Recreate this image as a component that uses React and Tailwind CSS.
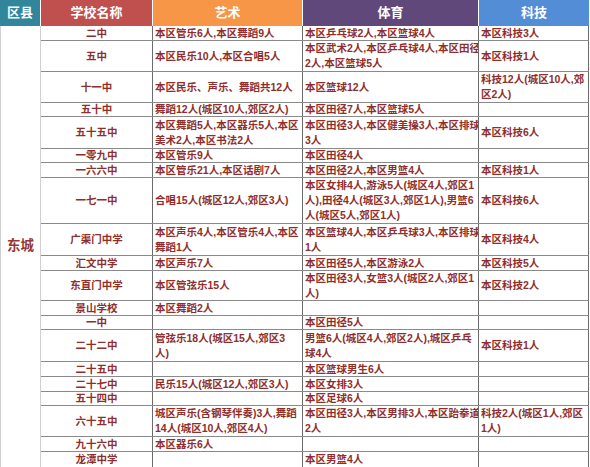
const rows = [
  { h: "h-[15px]", name: "二中", art: ["本区管乐6人,本区舞蹈9人"], sport: ["本区乒乓球2人,本区篮球4人"], tech: ["本区科技3人"] },
  { h: "h-[31px]", name: "五中", art: ["本区民乐10人,本区合唱5人"], sport: ["本区武术2人,本区乒乓球4人,本区田径", "2人,本区篮球5人"], tech: ["本区科技1人"] },
  { h: "h-[31px]", name: "十一中", art: ["本区民乐、声乐、舞蹈共12人"], sport: ["本区篮球12人"], tech: ["科技12人(城区10人,郊", "区2人)"] },
  { h: "h-[14px]", name: "五十中", art: ["舞蹈12人(城区10人,郊区2人)"], sport: ["本区田径7人,本区篮球5人"], tech: [] },
  { h: "h-[32px]", name: "五十五中", art: ["本区舞蹈5人,本区器乐5人,本区", "美术2人,本区书法2人"], sport: ["本区田径3人,本区健美操3人,本区排球", "3人"], tech: ["本区科技6人"] },
  { h: "h-[14px]", name: "一零九中", art: ["本区管乐9人"], sport: ["本区田径4人"], tech: [] },
  { h: "h-[15px]", name: "一六六中", art: ["本区管乐21人,本区话剧7人"], sport: ["本区田径2人,本区男篮4人"], tech: ["本区科技1人"] },
  { h: "h-[46px]", name: "一七一中", art: ["合唱15人(城区12人,郊区3人)"], sport: ["本区女排4人,游泳5人(城区4人,郊区1", "人),田径4人(城区3人,郊区1人),男篮6", "人(城区5人,郊区1人)"], tech: ["本区科技6人"] },
  { h: "h-[32px]", name: "广渠门中学", art: ["本区声乐4人,本区管乐4人,本区", "舞蹈1人"], sport: ["本区篮球4人,本区乒乓球3人,本区排球", "1人"], tech: ["本区科技4人"] },
  { h: "h-[15px]", name: "汇文中学", art: ["本区声乐7人"], sport: ["本区田径5人,本区游泳2人"], tech: ["本区科技5人"] },
  { h: "h-[30px]", name: "东直门中学", art: ["本区管弦乐15人"], sport: ["本区田径3人,女篮3人(城区2人,郊区1", "人)"], tech: ["本区科技2人"] },
  { h: "h-[15px]", name: "景山学校", art: ["本区舞蹈2人"], sport: [], tech: [] },
  { h: "h-[14px]", name: "一中", art: [], sport: ["本区田径5人"], tech: [] },
  { h: "h-[32px]", name: "二十二中", art: ["管弦乐18人(城区15人,郊区3", "人)"], sport: ["男篮6人(城区4人,郊区2人),城区乒乓", "球4人"], tech: ["本区科技1人"] },
  { h: "h-[15px]", name: "二十五中", art: [], sport: ["本区篮球男生6人"], tech: [] },
  { h: "h-[15px]", name: "二十七中", art: ["民乐15人(城区12人,郊区3人)"], sport: ["本区女排3人"], tech: [] },
  { h: "h-[14px]", name: "五十四中", art: [], sport: ["本区足球6人"], tech: [] },
  { h: "h-[31px]", name: "六十五中", art: ["城区声乐(含钢琴伴奏)3人,舞蹈", "14人(城区10人,郊区4人)"], sport: ["本区田径3人,本区男排3人,本区跆拳道", "2人"], tech: ["科技2人(城区1人,郊区", "1人)"] },
  { h: "h-[15px]", name: "九十六中", art: ["本区器乐6人"], sport: [], tech: [] },
  { h: "h-[15px]", name: "龙潭中学", art: [], sport: ["本区男篮4人"], tech: [] },
];

function Cell({ lines, w, center }) {
  return (
    <div
      className={`${w} shrink-0 border-r border-[#6b6b6b] flex flex-col justify-center overflow-hidden ${
        center ? "items-center font-bold" : "pl-[2px]"
      }`}
    >
      {lines.map((l, i) => (
        <div key={i} className="whitespace-nowrap leading-[15px]">
          {l}
        </div>
      ))}
    </div>
  );
}

export default function App() {
  return (
    <div
      className="w-[590px] h-[467px] bg-white overflow-hidden text-[10.5px] font-semibold text-[#8f2f2d]"
      style={{ fontFamily: '"Liberation Sans", "Noto Sans CJK SC", sans-serif' }}
    >
      <div className="flex h-[26px] text-white font-bold text-[13px]">
        <div className="w-[41px] bg-[#31869b] border-r border-white flex items-center justify-center">区县</div>
        <div className="w-[112px] bg-[#c0504d] border-r border-white flex items-center justify-center">学校名称</div>
        <div className="w-[150px] bg-[#f79646] border-r border-white flex items-center justify-center">艺术</div>
        <div className="w-[176px] bg-[#60497a] border-r border-white flex items-center justify-center">体育</div>
        <div className="w-[110px] bg-[#538dd5] flex items-center justify-center">科技</div>
      </div>

      <div className="flex w-[589px] border-b border-[#3a3a3a]">
        <div className="w-[41px] shrink-0 border-l border-[#d0d0d0] border-r border-[#4a4a4a] flex items-center justify-center font-bold text-[13.5px] text-[#953735]">
          东城
        </div>
        <div className="flex flex-col">
          {rows.map((r, i) => (
            <div
              key={r.name}
              className={`${r.h} flex box-border ${i < rows.length - 1 ? "border-b border-[#8a8a8a]" : ""}`}
            >
              <Cell lines={[r.name]} w="w-[112px]" center />
              <Cell lines={r.art} w="w-[150px]" />
              <Cell lines={r.sport} w="w-[176px]" />
              <Cell lines={r.tech} w="w-[110px]" />
            </div>
          ))}
        </div>
      </div>
    </div>
  );
}
